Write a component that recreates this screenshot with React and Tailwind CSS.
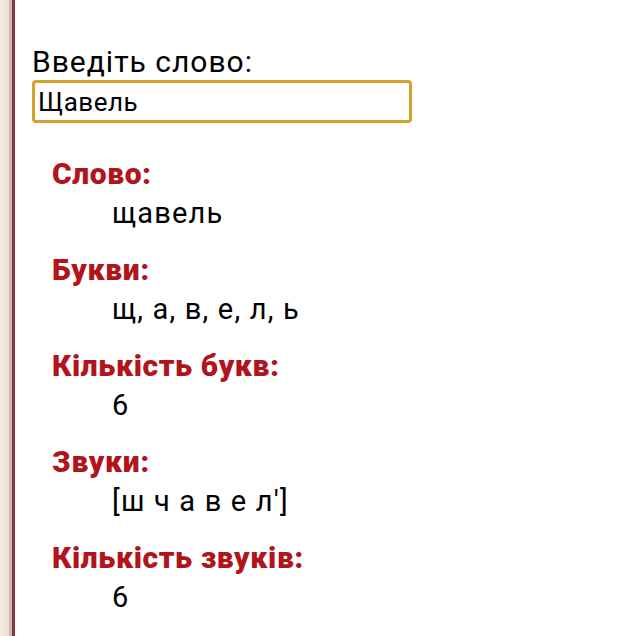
import React, { useState } from 'react';

const rows = [
  { label: 'Слово:', value: 'щавель' },
  { label: 'Букви:', value: 'щ, а, в, е, л, ь' },
  { label: 'Кількість букв:', value: '6' },
  { label: 'Звуки:', value: "[ш ч а в е л']" },
  { label: 'Кількість звуків:', value: '6' },
];

const App = () => {
  const [word, setWord] = useState('Щавель');

  return (
    <div className="flex min-h-[636px] bg-white" style={{ fontFamily: 'Roboto, "Noto Sans", sans-serif' }}>
      <div className="w-[9px] shrink-0 bg-gradient-to-r from-[#f3eee0] to-[#e6e2d2]" />
      <div className="w-[3px] shrink-0 bg-[#d9b3b3]" />
      <div className="w-[3px] shrink-0 bg-[#7d3c3c]" />
      <div className="flex-1 pl-[17px] pt-[44px]">
        <div className="text-[30px] leading-[36px] tracking-[1px] text-black">Введіть слово:</div>
        <input
          value={word}
          onChange={(e) => setWord(e.target.value)}
          autoFocus
          className="block h-[43px] w-[380px] rounded-[4px] border-[3px] border-[#d3a12d] px-[3px] text-[26px] tracking-[0.5px] text-black outline-none"
        />
        <div className="pl-[20px] pt-[36px]">
          {rows.map((row) => (
            <div key={row.label} className="h-[96px]">
              <div className="text-[30px] font-black leading-[30px] tracking-[0.6px] text-[#b2141c]">{row.label}</div>
              <div className="pl-[60px] pt-[9px] text-[29px] leading-[30px] tracking-[1.2px] text-black">{row.value}</div>
            </div>
          ))}
        </div>
      </div>
    </div>
  );
};

export default App;
